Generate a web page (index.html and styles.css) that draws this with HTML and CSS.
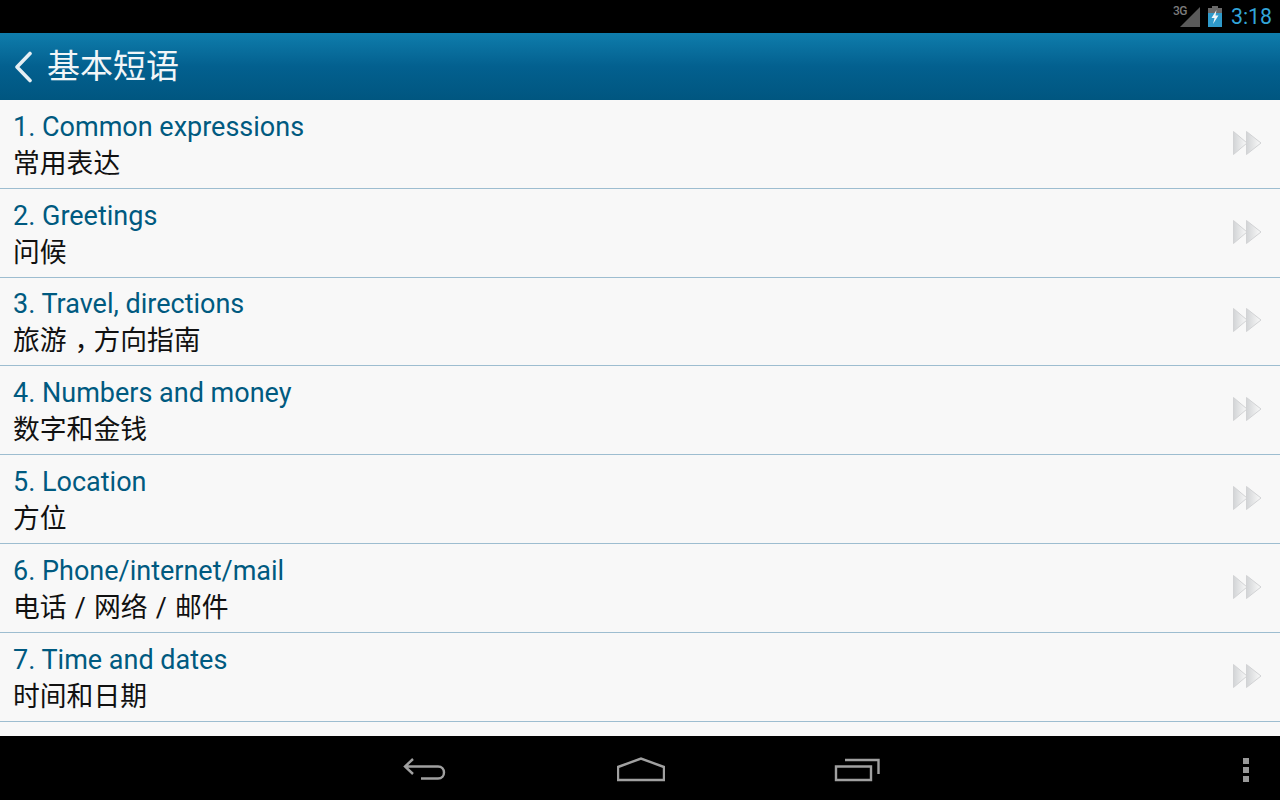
FILE: index.html
```html
<!DOCTYPE html>
<html lang="zh">
<head>
<meta charset="utf-8">
<title>基本短语</title>
<link rel="stylesheet" href="styles.css">
</head>
<body>
<div class="screen">
  <header class="status">
    <span class="net">3G</span>
    <svg class="signal" width="20" height="22" viewBox="0 0 20 22"><path d="M20 1V21H0Z" fill="#5a5a5a"/></svg>
    <svg class="battery" width="16" height="21" viewBox="0 0 16 21"><path d="M5 0h6v2h4v19H1V2h4z" fill="#6a6a6a"/><path d="M1 7h14v14H1z" fill="#2f9acb"/><path d="M9.500 4 4.500 12h3l-1.500 6 5.500-8.500h-3z" fill="#f0f6f9"/></svg>
    <span class="clock">3:18</span>
  </header>
  <div class="appbar">
    <svg class="back" width="20" height="32" viewBox="0 0 20 32"><path d="M17 2.500 4 16l13 13.500" fill="none" stroke="#e6eff4" stroke-width="3.600" stroke-linecap="round" stroke-linejoin="round"/></svg>
    <h1 class="title">基本短语</h1>
  </div>
  <main class="list">
    <div class="row"><div class="text"><div class="en">1. Common expressions</div><div class="zh">常用表达</div></div><svg class="arrows" width="30" height="26" viewBox="0 0 30 26"><use href="#ff"/></svg></div>
    <div class="row"><div class="text"><div class="en">2. Greetings</div><div class="zh">问候</div></div><svg class="arrows" width="30" height="26" viewBox="0 0 30 26"><use href="#ff"/></svg></div>
    <div class="row"><div class="text"><div class="en">3. Travel, directions</div><div class="zh">旅游<span class="comma">，</span>方向指南</div></div><svg class="arrows" width="30" height="26" viewBox="0 0 30 26"><use href="#ff"/></svg></div>
    <div class="row"><div class="text"><div class="en">4. Numbers and money</div><div class="zh">数字和金钱</div></div><svg class="arrows" width="30" height="26" viewBox="0 0 30 26"><use href="#ff"/></svg></div>
    <div class="row"><div class="text"><div class="en">5. Location</div><div class="zh">方位</div></div><svg class="arrows" width="30" height="26" viewBox="0 0 30 26"><use href="#ff"/></svg></div>
    <div class="row"><div class="text"><div class="en">6. Phone/internet/mail</div><div class="zh spaced">电话 / 网络 / 邮件</div></div><svg class="arrows" width="30" height="26" viewBox="0 0 30 26"><use href="#ff"/></svg></div>
    <div class="row"><div class="text"><div class="en">7. Time and dates</div><div class="zh">时间和日期</div></div><svg class="arrows" width="30" height="26" viewBox="0 0 30 26"><use href="#ff"/></svg></div>
  </main>
  <nav class="nav">
    <svg class="nav-back" width="46" height="26" viewBox="0 0 46 26"><path d="M11 2 3 9.500l8 7.500M3 9.500h33c8 0 8 12 0 12H19" fill="none" stroke="#a0a0a0" stroke-width="2.400"/></svg>
    <svg class="nav-home" width="48" height="26" viewBox="0 0 48 26"><path d="M1 10 24 1.500 47 10v13H1z" fill="none" stroke="#a0a0a0" stroke-width="2.400"/></svg>
    <svg class="nav-recent" width="46" height="24" viewBox="0 0 46 24"><path d="M2 8.500h35V22H2zM11 2h33.500v14" fill="none" stroke="#a0a0a0" stroke-width="2.400"/></svg>
    <span class="menu"><i></i><i></i><i></i></span>
  </nav>
</div>
<svg class="defs" width="0" height="0"><defs>
  <linearGradient id="g" x1="0" y1="0" x2="1" y2="0"><stop offset="0" stop-color="#d2d4d6"/><stop offset="1" stop-color="#fafafa"/></linearGradient>
  <g id="ff"><path d="M1.500 1.500 15 13 1.500 24.500z" fill="url(#g)" stroke="#d2d3d5"/><path d="M14.500 1.500 29 13 14.500 24.500z" fill="url(#g)" stroke="#d2d3d5"/></g>
</defs></svg>
</body>
</html>
```
FILE: styles.css
```css
* { box-sizing: border-box; }
html, body { margin: 0; padding: 0; }
body { width: 1280px; height: 800px; overflow: hidden; background: #000; font-family: Roboto, "Noto Sans CJK SC", sans-serif; }
.screen { width: 1280px; height: 800px; display: flex; flex-direction: column; }
.defs { display: block; }
.status { height: 33px; background: #000; display: flex; align-items: center; justify-content: flex-end; padding-right: 8px; flex: none; }
.net { font-size: 12px; font-weight: 500; color: #7c7c7c; align-self: flex-start; margin: 4px -7px 0 0; position: relative; z-index: 1; letter-spacing: -0.5px; }
.signal { margin-right: 7px; }
.battery { margin-right: 8px; }
.clock { font-size: 21.300px; color: #33a5d8; line-height: 34px; }
.appbar { height: 67px; flex: none; display: flex; align-items: center; padding-left: 13px; background: linear-gradient(#0f7dac 0%, #03608f 50%, #005680 100%); }
.back { margin-right: 14px; }
.title { margin: 0; font-size: 33px; font-weight: 400; color: #f2f6f8; line-height: 1; }
.list { flex: 1; min-height: 0; background: #f8f8f8; overflow: hidden; }
.row { height: 88.8px; border-bottom: 1px solid #9dbdd0; display: flex; align-items: center; justify-content: space-between; padding: 0 18px 0 13px; }
.text { display: flex; flex-direction: column; padding-top: 4px; }
.arrows { margin-bottom: 2px; }
.en { font-size: 27px; line-height: 37px; color: #005a80; }
.zh { font-size: 26.800px; line-height: 37px; color: #111; }
.comma { padding-left: 8px; letter-spacing: -8px; }
.spaced { word-spacing: 1.500px; }
.nav { height: 64px; flex: none; background: #000; display: flex; align-items: center; position: relative; padding: 3px 0 0 402px; }
.nav-back { margin-right: 169px; }
.nav-home { margin-right: 169px; }
.menu { position: absolute; left: 1243px; top: 22px; display: flex; flex-direction: column; gap: 3px; }
.menu i { display: block; width: 6px; height: 6px; background: #9a9a9a; }
```
